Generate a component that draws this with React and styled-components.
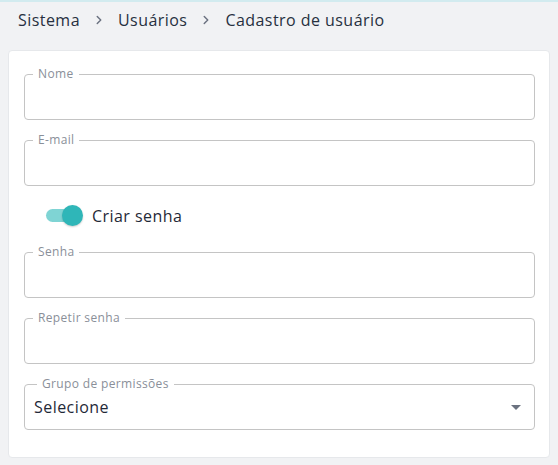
import React from 'react'
import styled, { createGlobalStyle } from 'styled-components'
import { ChevronRight } from 'lucide-react'

const GlobalStyle = createGlobalStyle`
  html, body {
    margin: 0;
    padding: 0;
    background: #f1f2f4;
    font-family: "Open Sans", "Liberation Sans", sans-serif;
    color: #1f2937;
  }
`

const Page = styled.div`
  min-height: 465px;
  border-top: 2px solid #d2ebef;
  padding: 0 8px 8px;
  box-sizing: border-box;
`

const Breadcrumb = styled.nav`
  display: flex;
  align-items: center;
  gap: 12px;
  height: 36px;
  padding-left: 10px;
  margin-bottom: 12px;
  font-size: 16px;
  letter-spacing: 0.45px;
  color: #27303f;
  svg {
    color: #6b7280;
  }
`

const Card = styled.div`
  background: #fff;
  border: 1px solid #e6e8eb;
  border-radius: 4px;
  padding: 16px 14px 27px 15px;
  display: flex;
  flex-direction: column;
  gap: 13px;
`

const Field = styled.fieldset`
  margin: 0;
  padding: 0 9px 0 ${p => (p.$select ? '12px' : '8px')};
  height: 53px;
  box-sizing: border-box;
  border: 1px solid #c4c4c4;
  border-radius: 4px;
  display: flex;
  align-items: center;
`

const Legend = styled.legend`
  font-size: 12px;
  line-height: 14px;
  padding: 0 5px;
  letter-spacing: 0.35px;
  color: #8a8f99;
`

const Input = styled.input`
  border: none;
  outline: none;
  flex: 1;
  font: inherit;
  font-size: 16px;
  padding: 0 2px;
  background: transparent;
`

const SelectValue = styled.span`
  flex: 1;
  font-size: 16px;
  letter-spacing: 0.45px;
  color: #1f2937;
  margin-left: -3px;
  margin-top: 5px;
`

const Caret = styled.span`
  width: 0;
  height: 0;
  border-left: 5px solid transparent;
  border-right: 5px solid transparent;
  border-top: 5px solid #6b7280;
  margin-right: 4px;
  margin-top: 5px;
`

const ToggleRow = styled.label`
  display: flex;
  align-items: center;
  gap: 11px;
  height: 33px;
  padding-left: 22px;
  font-size: 16px;
  letter-spacing: 0.45px;
  color: #1f2937;
`

const Track = styled.span`
  position: relative;
  width: 35px;
  height: 13px;
  border-radius: 7px;
  background: ${p => (p.on ? '#7fd4d4' : '#c4c4c4')};
`

const Knob = styled.span`
  position: absolute;
  top: -4px;
  left: ${p => (p.on ? '16px' : '-2px')};
  width: 21px;
  height: 21px;
  border-radius: 50%;
  background: ${p => (p.on ? '#2fb6b8' : '#fafafa')};
  box-shadow: 0 1px 2px rgba(0, 0, 0, 0.2);
`

const TextField = ({ label }) => (
  <Field>
    <Legend>{label}</Legend>
    <Input />
  </Field>
)

export default function App() {
  return (
    <Page>
      <GlobalStyle />
      <Breadcrumb>
        <span>Sistema</span>
        <ChevronRight size={14} strokeWidth={2.5} />
        <span>Usuários</span>
        <ChevronRight size={14} strokeWidth={2.5} />
        <span>Cadastro de usuário</span>
      </Breadcrumb>
      <Card>
        <TextField label="Nome" />
        <TextField label="E-mail" />
        <ToggleRow>
          <Track on>
            <Knob on />
          </Track>
          Criar senha
        </ToggleRow>
        <TextField label="Senha" />
        <TextField label="Repetir senha" />
        <Field $select>
          <Legend>Grupo de permissões</Legend>
          <SelectValue>Selecione</SelectValue>
          <Caret />
        </Field>
      </Card>
    </Page>
  )
}
